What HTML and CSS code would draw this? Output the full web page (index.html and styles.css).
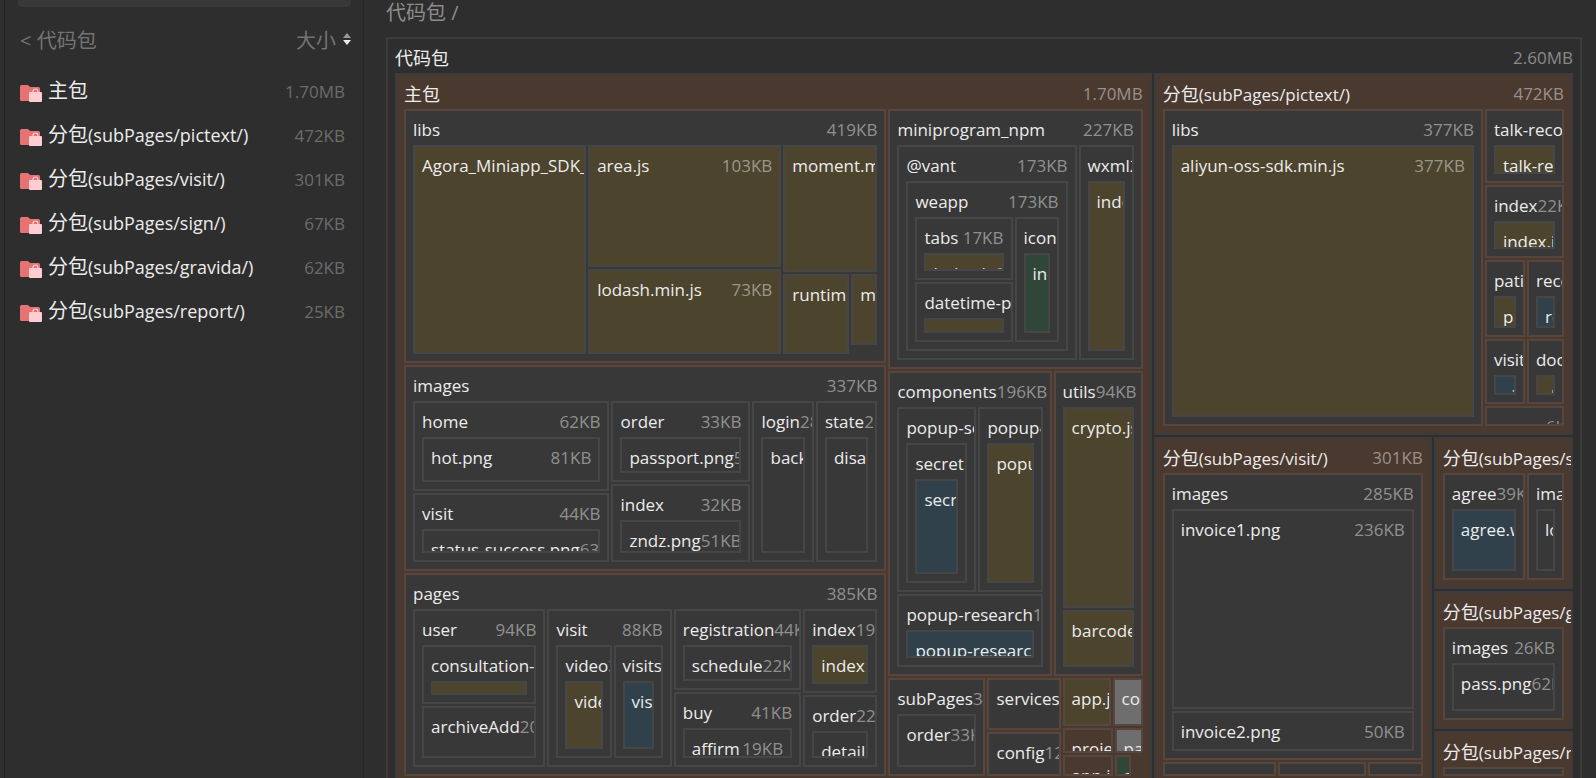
FILE: index.html
```html
<!DOCTYPE html>
<html lang="zh-CN">
<head>
  <meta charset="UTF-8" />
  <title>代码包</title>
  <link rel="stylesheet" href="styles.css">
</head>
<body>
  <aside class="sidebar">
    <input type="text" class="search" aria-label="搜索" />
    <div class="list-header">
      <button class="btn-back">&lt; 代码包</button>
      <button class="btn-sort">大小
        <svg width="8" height="12" viewBox="0 0 8 12"><path d="M4 0l4 5H0z" fill="#999"/><path d="M4 12L0 7h8z" fill="#eee"/></svg>
      </button>
    </div>
    <nav class="pkg-list"></nav>
  </aside>
  <main class="content">
    <div class="breadcrumb">代码包 /</div>
    <div class="treemap"></div>
  </main>
  <template id="folder-icon">
    <svg class="folder" width="22" height="17" viewBox="0 0 22 17">
      <path d="M1.500 0H8l2 2h8.500a1.500 1.500 0 0 1 1.500 1.500V16H1.500A1.500 1.500 0 0 1 0 14.500v-13A1.500 1.500 0 0 1 1.500 0z" fill="#e57373"/>
      <path d="M13 8V6.500a2.500 2.500 0 0 1 5 0V8" fill="none" stroke="#ffcdd2" stroke-width="1.200"/>
      <rect x="9" y="7" width="13" height="10" rx="1" fill="#ffcdd2"/>
    </svg>
  </template>
  <script>
    const pacotes = [
      ['主包', '1.70MB'],
      ['分包(subPages/pictext/)', '472KB'],
      ['分包(subPages/visit/)', '301KB'],
      ['分包(subPages/sign/)', '67KB'],
      ['分包(subPages/gravida/)', '62KB'],
      ['分包(subPages/report/)', '25KB']
    ];

    // box(name, size, kind, child), row/col take [weight, item] pairs
    const box = (name, size, kind, child) => ({ name, size, kind, child });
    const row = (...items) => ({ dir: 'columns', items });
    const col = (...items) => ({ dir: 'rows', items });

    const libs = box('libs', '419KB', 'dir', row(
      [173, box('Agora_Miniapp_SDK_for_WeChat.js', '162KB', 'js')],
      [193, col([122, box('area.js', '103KB', 'js')], [86, box('lodash.min.js', '73KB', 'js')])],
      [94, col(
        [127, box('moment.min.js', '53KB', 'js')],
        [80, row([66, box('runtime.js', '24KB', 'js')], [26, col([71, box('md5.js', '8KB', 'js')], [7, null])])]
      )]
    ));

    const images = box('images', '337KB', 'dir', row(
      [195, col(
        [89, box('home', '62KB', 'dir', box('hot.png', '81KB', 'dir'))],
        [69, box('visit', '44KB', 'dir', box('status-success.png', '63KB', 'dir'))]
      )],
      [138, col(
        [80, box('order', '33KB', 'dir', box('passport.png', '54KB', 'dir'))],
        [78, box('index', '32KB', 'dir', box('zndz.png', '51KB', 'dir'))]
      )],
      [61, box('login', '28KB', 'dir', box('background.png', '28KB', 'dir'))],
      [61, box('state', '28KB', 'dir', box('disabled.png', '28KB', 'dir'))]
    ));

    const pages = box('pages', '385KB', 'dir', row(
      [132, box('user', '94KB', 'dir', col(
        [59, box('consultation-list', '24KB', 'dir', box('index.js', '9KB', 'js'))],
        [52, box('archiveAdd', '20KB', 'dir')]
      ))],
      [124, box('visit', '88KB', 'dir', row(
        [55, box('video', '30KB', 'dir', box('video.js', '20KB', 'js'))],
        [49, box('visits', '26KB', 'dir', box('visits.wxml', '12KB', 'wxml'))]
      ))],
      [127, col(
        [81, box('registration', '44KB', 'dir', box('schedule', '22KB', 'dir'))],
        [75, box('buy', '41KB', 'dir', box('affirm', '19KB', 'dir'))]
      )],
      [74, col(
        [84, box('index', '19KB', 'dir', box('index.js', '11KB', 'js'))],
        [72, box('order', '22KB', 'dir', box('detail', '12KB', 'dir'))]
      )]
    ));

    const npm = box('miniprogram_npm', '227KB', 'dir', row(
      [179, box('@vant', '173KB', 'dir', box('weapp', '173KB', 'dir', row(
        [97, col(
          [63, box('tabs', '17KB', 'dir', box('index.js', '6KB', 'js'))],
          [60, box('datetime-picker', '12KB', 'dir', box('index.js', '8KB', 'js'))]
        )],
        [44, box('icon', '11KB', 'dir', box('index.wxss', '10KB', 'wxss'))]
      )))],
      [55, box('wxml2canvas', '54KB', 'dir', box('index.js', '54KB', 'js'))]
    ));

    const components = box('components', '196KB', 'dir', col(
      [184, row(
        [79, box('popup-secret', '52KB', 'dir', box('secret', '50KB', 'dir', box('secret.wxml', '48KB', 'wxml')))],
        [64, box('popup', '40KB', 'dir', box('popup.js', '38KB', 'js'))]
      )],
      [73, box('popup-research', '16KB', 'dir', box('popup-research.wxml', '9KB', 'wxml'))]
    ));

    const utils = box('utils', '94KB', 'dir', col(
      [200, box('crypto.js', '62KB', 'js')],
      [57, box('barcode.js', '18KB', 'js')]
    ));

    const outros = row(
      [97, box('subPages', '34KB', 'dir', box('order', '33KB', 'dir'))],
      [73, col([52, box('services', '14KB', 'dir')], [44, box('config', '12KB', 'dir')])],
      [80, col(
        [48, row([48, box('app.js', '8KB', 'js')], [30, box('components.json', '6KB', 'other')])],
        [25, row([50, box('project.json', '3KB', 'none')], [28, box('package.json', '3KB', 'other')])],
        [21, row([50, box('app.json', '2KB', 'none')], [16, box('app.wxss', '1KB', 'wxss')], [10, null])]
      )]
    );

    const principal = box('主包', '1.70MB', 'pkg', row(
      [482, col([254, libs], [205, images], [203, pages])],
      [254, col([260, npm], [304, row([163, components], [89, utils])], [98, outros])]
    ));

    const pictext = box('分包(subPages/pictext/)', '472KB', 'pkg', row(
      [320, box('libs', '377KB', 'dir', box('aliyun-oss-sdk.min.js', '377KB', 'js'))],
      [79, col(
        [74, box('talk-record', '24KB', 'dir', box('talk-record.js', '12KB', 'js'))],
        [73, box('index', '22KB', 'dir', box('index.js', '11KB', 'js'))],
        [77, row(
          [40, box('patient', '12KB', 'dir', box('patient.js', '6KB', 'js'))],
          [37, box('record', '11KB', 'dir', box('record.wxml', '6KB', 'wxml'))]
        )],
        [65, row(
          [40, box('visit', '10KB', 'dir', box('visit.wxml', '5KB', 'wxml'))],
          [37, box('doctor', '9KB', 'dir', box('doctor.js', '4KB', 'js'))]
        )],
        [20, box('popup', '6KB', 'dir')]
      )]
    ));

    const visit = box('分包(subPages/visit/)', '301KB', 'pkg', col(
      [287, box('images', '285KB', 'dir', col(
        [200, box('invoice1.png', '236KB', 'dir')],
        [40, box('invoice2.png', '50KB', 'dir')]
      ))],
      [14, row([113, box('', '', 'dir')], [87, box('', '', 'dir')], [55, box('', '', 'dir')])]
    ));

    const sign = box('分包(subPages/sign/)', '67KB', 'pkg', row(
      [82, box('agree', '39KB', 'dir', box('agree.wxml', '30KB', 'wxml'))],
      [37, box('images', '20KB', 'dir', box('logo.png', '18KB', 'dir'))]
    ));
    const gravida = box('分包(subPages/gravida/)', '62KB', 'pkg',
      box('images', '26KB', 'dir', box('pass.png', '62KB', 'dir')));
    const report = box('分包(subPages/report/)', '25KB', 'pkg', box('', '', 'dir'));

    const raiz = box('代码包', '2.60MB', 'root', row(
      [756, principal],
      [419, col(
        [362, pictext],
        [348, row([278, visit], [139, col([152, sign], [138, gravida], [54, report])])]
      )]
    ));

    // CJK glyphs are set a little larger than the latin ones
    const label = text => text.replace(/[\u4e00-\u9fff]+/g, '<span class="zh">$&</span>');

    function render(item) {
      const el = document.createElement('div');
      if (!item) return el;
      if (item.items) {
        el.className = 'split';
        const tracks = item.items.map(([w]) => `minmax(0, ${w}fr)`).join(' ');
        el.style.setProperty('grid-template-' + item.dir, tracks);
        item.items.forEach(([, child]) => el.appendChild(render(child)));
        return el;
      }
      el.className = 'box ' + item.kind;
      el.innerHTML = `<div class="title"><span>${label(item.name)}</span><span class="size">${item.size}</span></div>`;
      if (item.child) {
        const body = document.createElement('div');
        body.className = 'body';
        body.appendChild(render(item.child));
        el.appendChild(body);
      }
      return el;
    }

    const lista = document.querySelector('.pkg-list');
    pacotes.forEach(([nome, tamanho]) => {
      const a = document.createElement('a');
      a.href = '#';
      a.appendChild(document.getElementById('folder-icon').content.cloneNode(true));
      a.insertAdjacentHTML('beforeend', `<span class="pkg-name">${label(nome)}</span><span class="pkg-size">${tamanho}</span>`);
      lista.appendChild(a);
    });

    document.querySelector('.treemap').appendChild(render(raiz));
  </script>
</body>
</html>
```
FILE: styles.css
```css
* {
  box-sizing: border-box;
  margin: 0;
  padding: 0;
}
body {
  display: flex;
  height: 100vh;
  overflow: hidden;
  background: #2e2e2e;
  color: #ececec;
  font-family: "Open Sans", "Noto Sans CJK SC", sans-serif;
  font-size: 17px;
}
button, input {
  font: inherit;
  color: inherit;
  background: none;
  border: none;
}
button {
  cursor: pointer;
}

/* Sidebar */
.sidebar {
  flex: 0 0 360px;
  margin-left: 4px;
  padding: 0 12px 0 13px;
  border-left: 1px solid #222;
  border-right: 1px solid #262626;
}
.search {
  display: block;
  width: 100%;
  height: 32px;
  margin-top: -25px;
  background: #383838;
  border-radius: 4px;
}
.list-header {
  display: flex;
  justify-content: space-between;
  align-items: center;
  height: 64px;
  padding-left: 2px;
  color: #747474;
}
.btn-back, .btn-sort, .breadcrumb {
  font-size: 20px;
}
.btn-sort {
  display: flex;
  align-items: center;
  gap: 7px;
}
.pkg-list a {
  display: flex;
  align-items: center;
  height: 44px;
  padding: 0 6px 4px 2px;
  color: inherit;
  text-decoration: none;
}
.folder {
  flex: none;
  margin: 5px 6px 0 0;
}
.pkg-name {
  flex: 1;
  font-size: 18px;
  line-height: 28px;
}
.pkg-name .zh {
  font-size: 20px;
}
.pkg-size {
  color: #6c6c6c;
}

/* Treemap */
.content {
  flex: 1;
  min-width: 0;
  padding: 0 14px 0 22px;
}
.breadcrumb {
  height: 37px;
  line-height: 26px;
  color: #8c8c8c;
}
.treemap {
  height: calc(100vh - 21px);
}
.treemap > .box {
  height: 100%;
}
.split {
  display: grid;
  gap: 2px;
  min-width: 0;
  min-height: 0;
}
.split > * {
  min-width: 0;
  min-height: 0;
}
.box {
  display: flex;
  flex-direction: column;
  overflow: hidden;
  border: 2px solid rgba(255, 255, 255, 0.07);
  background-clip: padding-box;
}
.title {
  display: flex;
  flex: none;
  justify-content: space-between;
  height: 34px;
  padding: 3px 7px 0;
  line-height: 32px;
  white-space: nowrap;
}
.title > span {
  flex: none;
}
.title .zh {
  font-size: 18px;
}
.size {
  color: rgba(255, 255, 255, 0.45);
}
.body {
  display: grid;
  flex: 1;
  grid-template-columns: minmax(0, 1fr);
  grid-template-rows: minmax(0, 1fr);
  min-height: 0;
  padding: 0 7px 7px;
}
.pkg { background-color: #4a392f; }
.dir { background-color: #383838; }
.js { background-color: #4c442d; }
.wxml { background-color: #30414b; }
.wxss { background-color: #2f4639; }
.other { background-color: #6e6e6e; }
```
